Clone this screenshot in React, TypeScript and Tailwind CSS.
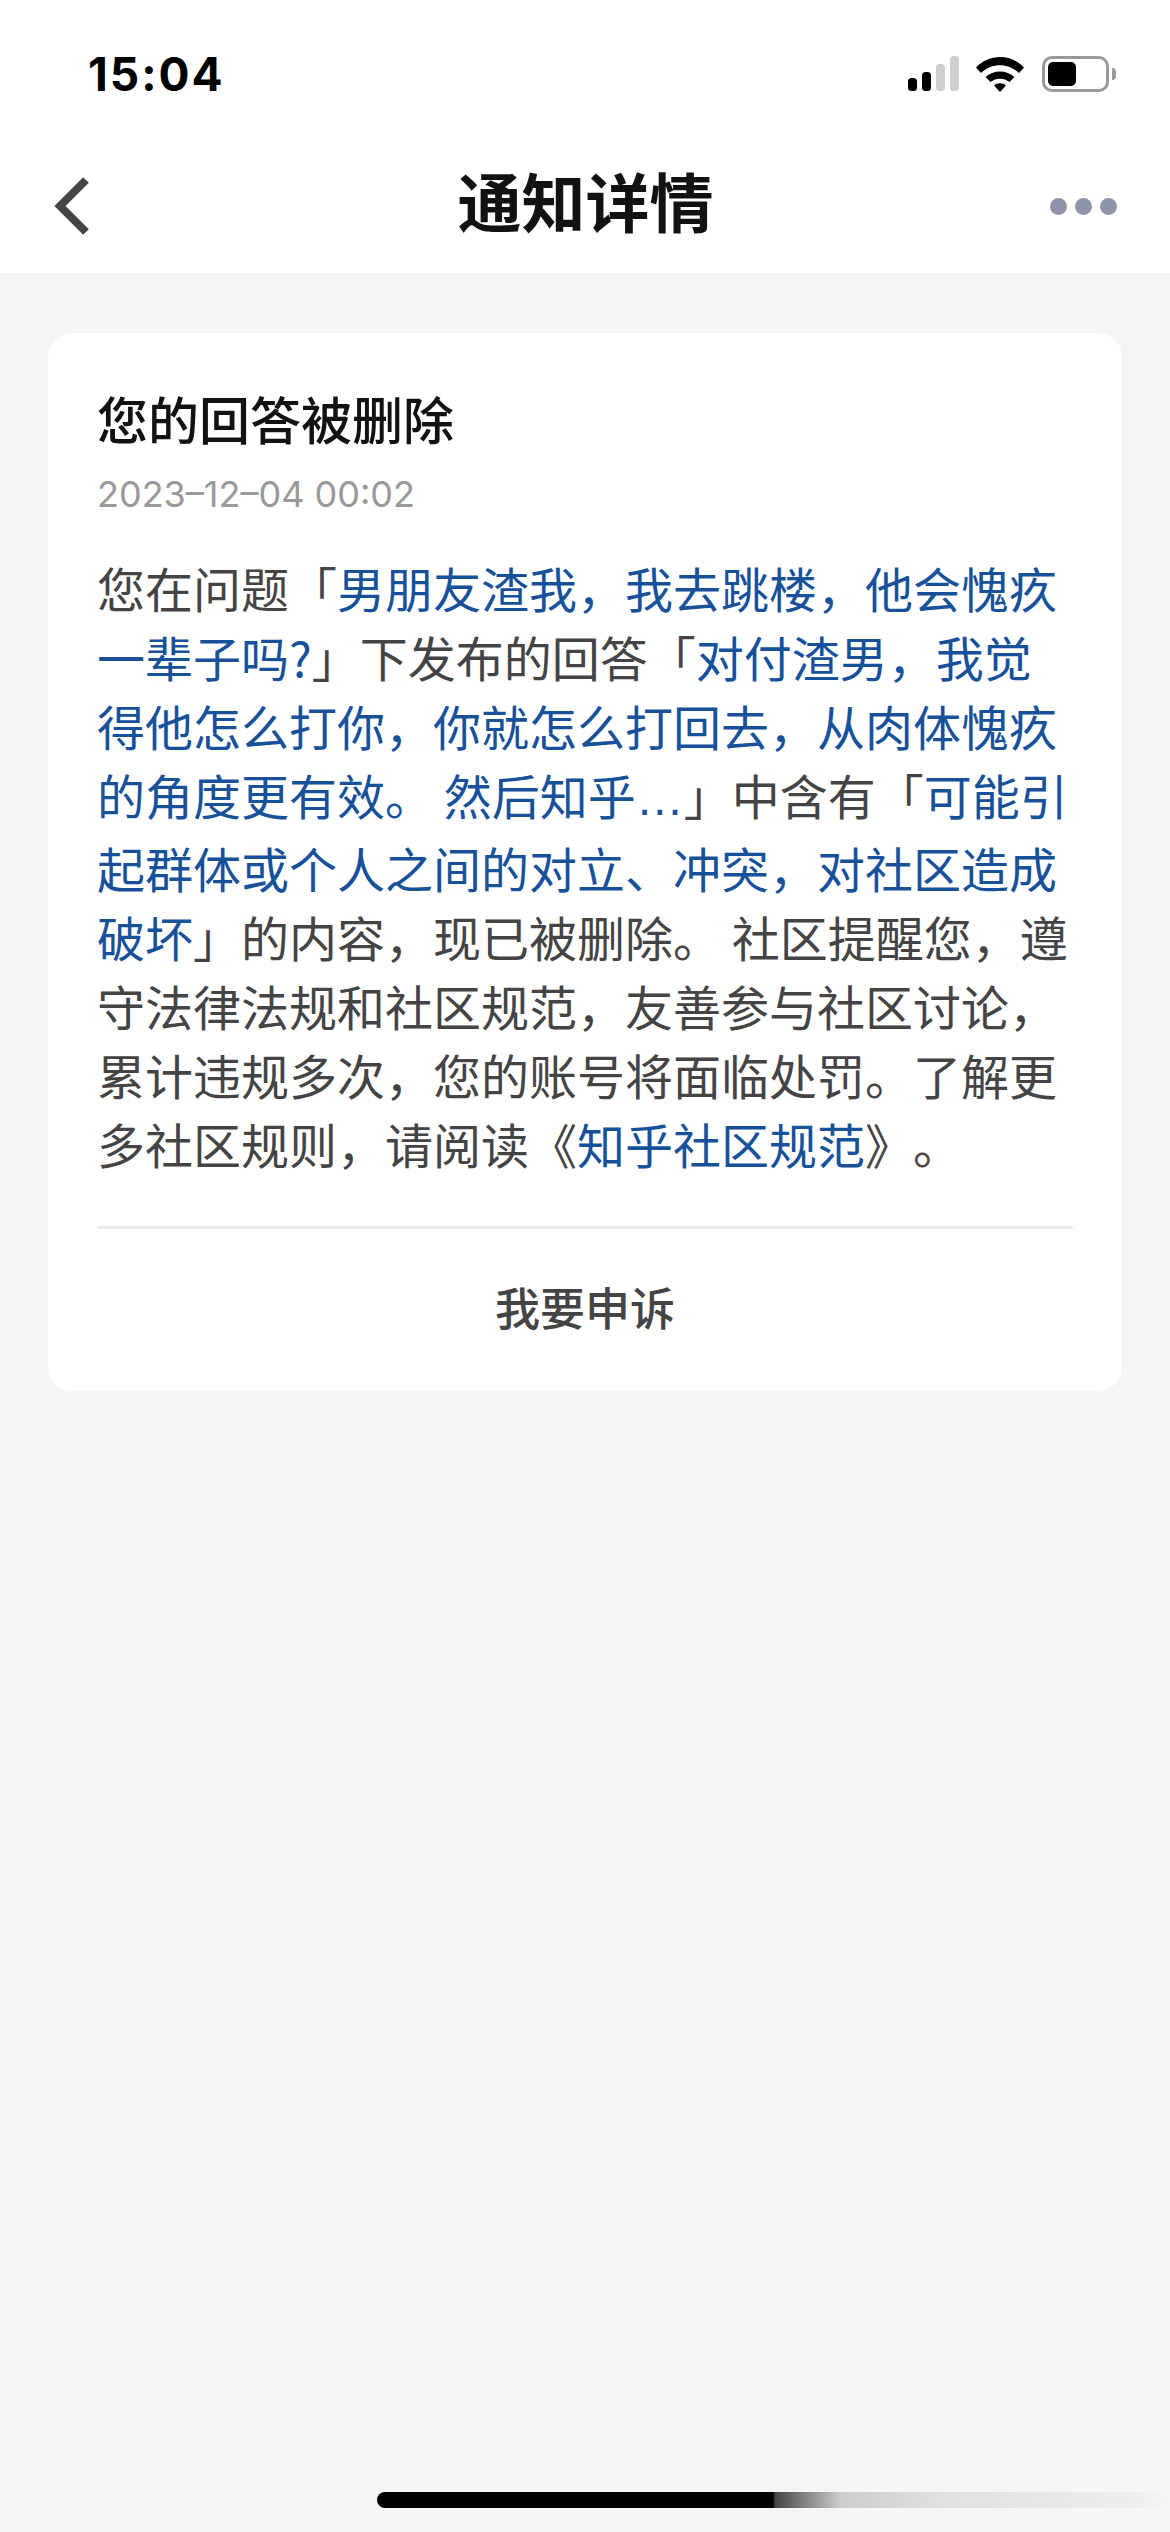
import type { ReactNode } from "react";

const cjk = "font-['Noto_Sans_CJK_SC','Noto_Sans',sans-serif]";

function Link({ children }: { children: ReactNode }) {
  return <span className="text-[#175199]">{children}</span>;
}

function StatusIcons() {
  return (
    <div className="flex items-center">
      <svg width="51" height="36" viewBox="0 0 51 36" className="block">
        <rect x="0" y="22" width="9" height="13" rx="3.5" fill="#000" />
        <rect x="14" y="16" width="9" height="19" rx="3.5" fill="#000" />
        <rect x="28" y="8" width="9" height="27" rx="3.5" fill="#cfcfcf" />
        <rect x="42" y="0" width="9" height="35" rx="3.5" fill="#cfcfcf" />
      </svg>
      <svg width="48" height="36" viewBox="0 0 48 36" className="block ml-[17px]">
        <path d="M0 11.5 C13 -2.5 35 -2.5 48 11.5 L43 17 C32.5 6.5 15.5 6.5 5 17 Z" fill="#000" />
        <path d="M9.5 21 C17 13.5 31 13.5 38.5 21 L33.5 26 C28 21.5 20 21.5 14.5 26 Z" fill="#000" />
        <path d="M18 29.5 C21 26.5 27 26.5 30 29.5 L24 36 Z" fill="#000" />
      </svg>
      <div className="flex items-center ml-[18px]">
        <div className="w-[67px] h-[36px] rounded-[10px] border-[3px] border-[#999999] p-[3px]">
          <div className="w-[28px] h-full rounded-[5px] bg-black" />
        </div>
        <div className="w-[4px] h-[12px] ml-[3px] rounded-r-[4px] bg-[#999999]" />
      </div>
    </div>
  );
}

export default function App() {
  return (
    <div className={`min-h-[2532px] flex flex-col bg-[#f5f5f5] [text-spacing-trim:space-all] ${cjk}`}>
      <header className="h-[273px] bg-white flex flex-col">
        <div className="h-[144px] pt-[56px] pl-[88px] pr-[54px] flex items-start justify-between">
          <span className="font-['Inter',sans-serif] font-bold text-[46px] leading-[36px] tracking-[2px] text-black">15:04</span>
          <StatusIcons />
        </div>
        <div className="flex-1 pl-[54px] pr-[53px] pb-[5px] grid grid-cols-3 items-center">
          <svg width="37" height="60" viewBox="0 0 37 60" className="block">
            <path d="M32 4 L6 30 L32 56" fill="none" stroke="#444444" strokeWidth="8" strokeLinejoin="miter" />
          </svg>
          <h1 className="justify-self-center whitespace-nowrap font-bold text-[64px] leading-[72px] mb-[14px] text-[#121212]">通知详情</h1>
          <div className="justify-self-end flex gap-[8px]">
            <span className="w-[17px] h-[17px] rounded-full bg-[#8f94a8]" />
            <span className="w-[17px] h-[17px] rounded-full bg-[#8f94a8]" />
            <span className="w-[17px] h-[17px] rounded-full bg-[#8f94a8]" />
          </div>
        </div>
      </header>

      <main className="flex-1 flex flex-col px-[48px] pt-[60px]">
        <section className="bg-white rounded-[24px] px-[49px] pt-[55px] h-[1058px] flex flex-col">
          <h2 className="font-medium text-[51px] leading-[60px] text-[#121212]">您的回答被删除</h2>
          <p className="mt-[24px] font-['Inter',sans-serif] text-[36px] leading-[44px] text-[#999999]">2023–12–04 00:02</p>
          <p className="mt-[37px] text-[48px] leading-[69px] text-[#444444] w-[980px]">
            您在问题「<Link>男朋友渣我，我去跳楼，他会愧疚一辈子吗?</Link>」下发布的回答「<Link>对付渣男，我觉得他怎么打你，你就怎么打回去，从肉体愧疚的角度更有效。 然后知乎<span className="font-['Liberation_Sans',sans-serif]">…</span></Link>」中含有「<Link>可能引起群体或个人之间的对立、冲突，对社区造成破坏</Link>」的内容，现已被删除。 社区提醒您，遵守法律法规和社区规范，友善参与社区讨论，累计违规多次，您的账号将面临处罚。了解更多社区规则，请阅读《<Link>知乎社区规范</Link>》。
          </p>
          <div className="mt-[48px] h-[3px] bg-[#ebebeb]" />
          <button className="flex-1 flex items-center justify-center font-medium text-[45px] text-[#444444] pb-[6px]">我要申诉</button>
        </section>
      </main>

      <div className="h-[40px] pl-[377px]">
        <div className="w-[793px] h-[16px] rounded-l-[8px] bg-[linear-gradient(90deg,#000_0,#000_396px,#444444_398px,#cccccc_463px,#e0e0e0_563px,#eeeeee_763px,#f5f5f5_793px)]" />
      </div>
    </div>
  );
}
